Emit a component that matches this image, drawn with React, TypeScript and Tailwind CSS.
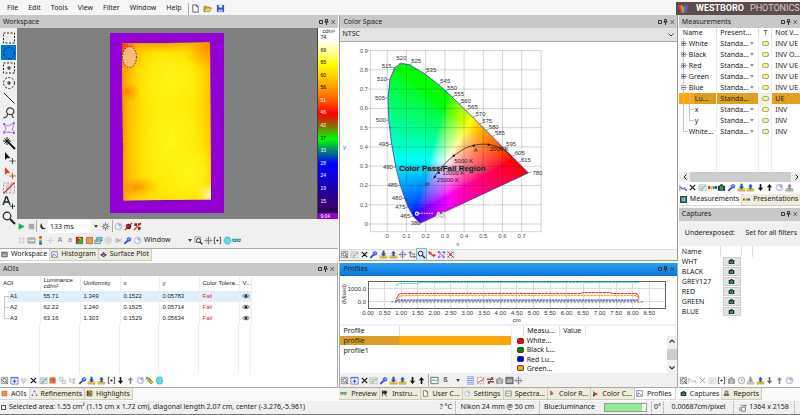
import React from "react";
import type { ReactNode } from "react";

/* ------------------------------------------------------------------ */
/* Icons: small 10x10 drawings shared by every toolbar                  */
/* ------------------------------------------------------------------ */

const tray = (arrow: string, base: string, up: boolean) => (
  <>
    <path d="M.5 6.500 2.500 5.500h5l2 1V9h-9z" fill={base} />
    <path d="M1 9h8" stroke="#8b8140" strokeWidth=".6" />
    <path d={up ? "M5 .8 7.600 4H6.200v3H3.800V4H2.400z" : "M3.800.8h2.400V4h1.600L5 7.400 2.200 4h1.600z"} fill={arrow} />
  </>
);

const camera = (body: string, lens: string) => (
  <>
    <path d="M1 3h2l1-1.500h2L7 3h2v5.700H1z" fill={body} />
    <circle cx="5" cy="5.600" r="2.200" fill={lens} />
    <circle cx="5" cy="5.600" r=".9" fill={body} />
  </>
);

const sheet = (a: string, b: string) => (
  <>
    <path d="M1 2h8v6.500H1z" fill="#eef3ee" stroke={a} strokeWidth=".7" />
    <path d="M1 4h8M1 6h5M3.500 2v6.500" stroke={a} strokeWidth=".5" />
    <path d="M3 8.500 8.500 2.500" stroke={b} strokeWidth="1.300" />
  </>
);

const arrowDown = (c: string) => <path d="M4.100 1h1.800v4.400h2L5 9 2.100 5.400h2z" fill={c} />;
const arrowUp = (c: string) => <path d="M4.100 9h1.800V4.600h2L5 1 2.100 4.600h2z" fill={c} />;

const icons: Record<string, ReactNode> = {
  find: (
    <>
      <path d="M1.500 1.500h7v7h-7z" fill="#f4f4f4" stroke="#777" strokeWidth=".8" />
      <circle cx="5" cy="4.800" r="2" fill="#fff" stroke="#444" strokeWidth=".9" />
      <path d="m6.300 6.200 2.200 2.300" stroke="#444" />
    </>
  ),
  sheet: sheet("#9db5a6", "#9cbfa5"),
  sheetGray: sheet("#ccc", "#d5d5d5"),
  sheetBlue: sheet("#7fa6cf", "#7ab57c"),
  x: <path d="m2 2 6 6M8 2 2 8" stroke="#111" strokeWidth="1.300" />,
  xGray: <path d="m2 2 6 6M8 2 2 8" stroke="#999" strokeWidth="1" />,
  wrench: (
    <>
      <path d="M1.500 8.800 5.500 4.800" stroke="#2a45c8" strokeWidth="1.900" />
      <path d="M3.800 2.800 6.500 1l2.800 1.200-.5 3.300-3 1z" fill="#4a66e0" />
      <path d="m6 4 2.500-2" stroke="#dce3ff" strokeWidth=".9" />
    </>
  ),
  trayDown: tray("#2f4fd0", "#e8c935", false),
  trayUp: tray("#2f4fd0", "#e8c935", true),
  trayGray: tray("#999", "#ccc", false),
  trayPink: tray("#c061c5", "#9fc59f", true),
  target: (
    <>
      <circle cx="5" cy="5" r="3" fill="#dfe3f2" stroke="#a5aac0" strokeWidth=".8" />
      <path d="M5 .5v9M.5 5h9" stroke="#6f7694" strokeWidth=".9" />
    </>
  ),
  axes: <path d="M2.500 1v6.500H9.500M.8 3h3.400M7 6v3M4 4.400h4" stroke="#555" strokeWidth=".9" fill="none" />,
  zoom: (
    <>
      <circle cx="4" cy="4" r="2.600" fill="#eef" stroke="#222" strokeWidth="1.100" />
      <path d="m6 6 3 3" stroke="#222" strokeWidth="1.500" />
    </>
  ),
  redArrow: (
    <>
      <path d="m1 1 4.500 2L3 5.300z" fill="#e22" />
      <path d="m3 3 3.500 3.500M6 6h3.500M7.700 4.500v3.500" stroke="#e22" strokeWidth="1.200" />
    </>
  ),
  nodes: (
    <>
      <path d="M2 2 8 3 7 8 3 7z" fill="none" stroke="#c880e0" strokeWidth=".8" />
      <path d="M1 1h2v2H1zM7 1.500h2v2H7zM6.500 7h2v2h-2zM1 7h2v2H1z" fill="#6a50e6" />
      <path d="m3 3 4 4" stroke="#e55" />
    </>
  ),
  nodesX: (
    <>
      <path d="M1.500 1.500h7v7h-7z" fill="none" stroke="#999" strokeDasharray="1 1" />
      <path d="M3.500 3.500h3v3h-3z" fill="#888" />
      <path d="m2 2 6.500 6.500M8 2 2 8" stroke="#d33" strokeWidth="1.100" />
    </>
  ),
  add: (
    <>
      <path d="M1 1.500h8v7.500H1z" fill="#eef2ff" stroke="#5b66b0" strokeWidth=".8" />
      <path d="M1 2h8" stroke="#5b66b0" strokeWidth="1.200" />
      <path d="M5 3.800v4M3 5.800h4" stroke="#2a3bd0" strokeWidth="1" />
    </>
  ),
  heart: <path d="M5 8.500 1.500 4.500l1.500-2 2 1.300L7 2.500l1.500 2z" fill="#ddd" stroke="#bbb" strokeWidth=".8" />,
  orange: (
    <>
      <path d="M1.500 1.500h7v7h-7z" fill="#f09a62" stroke="#a5582b" strokeWidth=".8" />
      <path d="M3 4h4M3 6h4" stroke="#e08550" strokeWidth=".7" />
    </>
  ),
  hatch: (
    <>
      <path d="M1.500 1.500h7v7h-7z" fill="#e88355" />
      <path d="m5 1.500 3.500 4M2 4h5M4 6.500h4" stroke="#8c4020" strokeWidth=".8" />
    </>
  ),
  copy: <path d="M1.500 1.500h4v4h-4zM4.500 4.500h4v4h-4z" fill="#eee" stroke="#bbb" strokeWidth=".9" />,
  tree: <path d="M2 1v6h3M2 4h3M5.500 3h2v2h-2zM5.500 6.500h2v2h-2z" fill="#eee" stroke="#bbb" strokeWidth=".9" />,
  brackets: (
    <>
      <path d="M3 1.500H1.500v7H3M7 1.500h1.500v7H7" fill="none" stroke="#333" strokeWidth=".9" />
      <path d="M3.500 5h3M5 3.700v2.600" stroke="#333" strokeWidth=".9" />
    </>
  ),
  down: arrowDown("#111"),
  up: arrowUp("#111"),
  upGray: arrowUp("#888"),
  downGray: arrowDown("#666"),
  lens: (
    <>
      <circle cx="5" cy="5" r="3.800" fill="#dfe3ee" stroke="#aeb4c8" strokeWidth=".8" />
      <path d="M5 1.800a3 3 0 0 1 3 3L5 5z" fill="#a3aedd" />
      <circle cx="4.300" cy="5.500" r="1.500" fill="#fff" />
    </>
  ),
  clock: (
    <>
      <circle cx="5" cy="5" r="3.600" fill="#f3f3f3" stroke="#999" strokeWidth=".9" />
      <path d="M5 3v2.200h1.800" fill="none" stroke="#999" strokeWidth=".8" />
    </>
  ),
  key: (
    <>
      <path d="m1.500 1.500 2.500.4L8.800 7 7 8.800 2 4z" fill="#d9d435" stroke="#55621b" strokeWidth=".8" />
      <path d="m3.500 4.500 3-1M5 6l2-1" stroke="#4d9a2d" />
    </>
  ),
  hex: <path d="M3 1.200h4L9 5 7 8.800H3L1 5z" fill="#62dce8" stroke="#4aa7b2" strokeWidth=".8" />,
  glasses: (
    <>
      <path d="M.5 3.500h3.800v2.700H1.200zM5.700 3.500h3.800L8.800 6.200H5.700z" fill="#7cdce0" stroke="#28757a" strokeWidth=".9" />
      <path d="M4.300 4.200h1.400" stroke="#28757a" />
    </>
  ),
  rainbow: (
    <>
      <path d="M0 3.500h2.500v3H0z" fill="#e11" />
      <path d="M2.500 3.500H5v3H2.500z" fill="#f6c500" />
      <path d="M5 3.500h2.500v3H5z" fill="#2db52d" />
      <path d="M7.500 3.500H10v3H7.500z" fill="#1c3ce0" />
    </>
  ),
  camera: camera("#26312c", "#33b97c"),
  cameraGray: camera("#9a9a9a", "#ccc"),
  wave: (
    <>
      <path d="M1 2v7M1 5l3 1 5 2" fill="none" stroke="#777" strokeWidth=".9" />
      <path d="m2 4 2 3 2-2 1.500 3L9 8" fill="none" stroke="#3344dd" strokeWidth="1" />
    </>
  ),
  waveGray: <path d="M1 2v6M2 4l3 2.500L8 5l1 3" fill="none" stroke="#aaa" strokeWidth="1" />,
  chart: (
    <>
      <path d="M1 1.500h8v7H1z" fill="#f6fff6" stroke="#4c6256" strokeWidth=".9" />
      <path d="M1.500 5.500 4 4l2 1.500L8.500 4" fill="none" stroke="#3a8d5b" strokeWidth=".9" />
    </>
  ),
  lines: <path d="M1 1h8M1 3h8M1 5h8M1 7h8M1 9h8" stroke="#6f86ea" strokeWidth=".9" />,
  slash: (
    <>
      <path d="M1.500 1.500h7v7h-7z" fill="#fff" stroke="#aaa" strokeWidth=".8" />
      <path d="m2 8 3-3 1.500 1L8.500 2" fill="none" stroke="#d33" />
    </>
  ),
  notEqual: (
    <>
      <path d="M1 3.500h7l-2-2M9 6.500H2l2 2" fill="none" stroke="#111" strokeWidth="1.100" />
      <path d="m2 9 6-8" stroke="#d22" strokeWidth="1" />
    </>
  ),
  table: (
    <>
      <path d="M1 1.500h8v7H1z" fill="#888" stroke="#444" strokeWidth=".8" />
      <path d="M2 4.500h6M2 6.500h6" stroke="#eee" strokeWidth=".8" />
    </>
  ),
  play: <path d="M1.800 1.500 8.500 5 1.800 8.500z" fill="#1fae58" />,
  stop: <path d="M2 2h6v6H2z" fill="#a9a9a9" />,
  moon: <path d="M4.500 1A3.800 3.800 0 1 0 9 7 4.500 4.500 0 0 1 4.500 1z" fill="#333" />,
  gear: (
    <>
      <path d="M5 .5v9M.5 5h9M1.800 1.800l6.400 6.400M8.200 1.800 1.800 8.200" stroke="#666" strokeWidth=".9" />
      <circle cx="5" cy="5" r="2" fill="#eee" stroke="#555" strokeWidth=".9" />
    </>
  ),
  noEye: (
    <>
      <circle cx="5" cy="5" r="3" fill="#333" />
      <circle cx="4" cy="5" r="1.500" fill="#e33" />
      <path d="m1 9 8-8" stroke="#e11" strokeWidth="1.400" />
    </>
  ),
  noGrid: (
    <>
      <path d="M1.500 1.500h3v3h-3zM5.500 5.500h3v3h-3zM5.500 1.500h3v2h-3z" fill="#444" />
      <path d="m1 9 8-8" stroke="#e11" strokeWidth="1.400" />
    </>
  ),
  grid: <path d="M3 1v8M7 1v8M1 3h8M1 7h8" stroke="#ccc" strokeWidth=".9" />,
  card: (
    <>
      <path d="M1 2h8v6H1z" fill="#bbb" stroke="#999" strokeWidth=".8" />
      <path d="M2 5h6" stroke="#eee" />
    </>
  ),
  palette: (
    <>
      <path d="M3.500.5h3v2.300h-3z" fill="#e11" />
      <path d="M3.500 2.800h3V5h-3z" fill="#f6d300" />
      <path d="M3.500 5h3v2.300h-3z" fill="#29ad29" />
      <path d="M3.500 7.300h3v2.200h-3z" fill="#1c3ce0" />
    </>
  ),
  crossGray: <path d="M5 1v8M1 5h8M3 3l1 1M7 3 6 4" stroke="#ccc" strokeWidth="1" />,
  split: (
    <>
      <path d="M1.500 1.500h7v7h-7z" fill="#e22" stroke="#222" strokeWidth=".8" />
      <path d="M8.500 1.500v7h-7z" fill="#2fbb2f" />
      <path d="m3 3 2.500-1.500L8 4" fill="#f6d300" />
    </>
  ),
  layers: (
    <>
      <path d="M3 1.500h6v4H3z" fill="#7bd1d4" stroke="#378287" strokeWidth=".8" />
      <path d="M1 4.500h6v4H1z" fill="#b9eaec" stroke="#378287" strokeWidth=".8" />
      <path d="M2 6h3" stroke="#d55" />
    </>
  ),
  at: (
    <>
      <circle cx="5" cy="5" r="3.600" fill="#eee" stroke="#bbb" strokeWidth=".9" />
      <circle cx="5" cy="5" r="1.300" fill="none" stroke="#aaa" strokeWidth=".9" />
    </>
  ),
  skip: <path d="M2 2v6M3.500 3l3.500 2-3.500 2zM7 3.500h2M7 6h2" fill="#aaa" stroke="#aaa" strokeWidth=".8" />,
  zoomArea: (
    <>
      <path d="M1 1h6v6H1z" fill="none" stroke="#444" strokeDasharray="1 1" />
      <circle cx="5" cy="5" r="2.200" fill="#fff" stroke="#222" />
      <path d="m6.500 6.500 2.700 2.700" stroke="#222" strokeWidth="1.300" />
    </>
  ),
  heat: (
    <>
      <path d="M0 0h10v10H0z" fill="#1a3bd5" />
      <path d="M2 2h6v6H2z" fill="#3c3" />
      <path d="M3 3h4v4H3z" fill="#fd0" />
      <path d="M4 4h2v2H4z" fill="#e22" />
    </>
  ),
  histogram: (
    <>
      <path d="M1 1h8v8H1z" fill="#fff" stroke="#456" strokeWidth=".9" />
      <path d="m2 8 2-4 2 2 2 2" fill="none" stroke="#22f" strokeWidth=".9" />
    </>
  ),
  surface: (
    <>
      <path d="M0 5.500 3 4l2-3 2 3 3 1.500L5 9z" fill="#2038c8" />
      <path d="M3 4.500 5 1l2 3.500z" fill="#e22" />
      <path d="M2.500 5.500h5L5 7.500z" fill="#f3cf20" />
    </>
  ),
  points: (
    <>
      <path d="M4 1h2v2H4zM1 6.500h2v2H1zM7 6.500h2v2H7z" fill="#3d55e0" />
      <path d="M4.500 3.500 2.500 6M5.500 3.500 7.500 6" stroke="#9aa8f0" strokeWidth=".8" />
    </>
  ),
  flags: (
    <>
      <path d="M2 1v8" stroke="#111" />
      <path d="M2 1h6v4H2z" fill="#222" />
      <path d="m5 6 4-3M5 5l3 4" stroke="#111" strokeWidth="1.100" />
      <path d="M3.500 2h1v1h-1z" fill="#fff" />
    </>
  ),
  doc: <path d="M2 1h4l2 2v6H2zM6 1v2h2" fill="#fff" stroke="#333" strokeWidth=".8" />,
  colorR: (
    <>
      <path d="M2 1v6l5-2z" fill="#c8579a" />
      <path d="M2 5v3l4-2z" fill="#3b9d5e" />
      <path d="M2 1 5 3 2 4z" fill="#667" />
    </>
  ),
  colorC: (
    <>
      <path d="M1.500.5v9l3-4.500z" fill="#18b648" />
      <path d="M3 3 9 6 3 8z" fill="#e22" />
      <path d="M1.500 6v3.500L5 8z" fill="#2238e0" />
    </>
  ),
  report: (
    <>
      <path d="M1 6h8v2.500H1z" fill="#666" />
      <path d="M3 1.500h4V6H3z" fill="#bbb" stroke="#444" strokeWidth=".8" />
    </>
  ),
  folder: (
    <>
      <path d="M1 8.500v-6h3l1 1h3v1" fill="#d7a93c" stroke="#8d6a1d" strokeWidth=".6" />
      <path d="m1 8.500 2-4h6.500l-2 4z" fill="#f5d06b" stroke="#8d6a1d" strokeWidth=".6" />
    </>
  ),
  save: (
    <>
      <path d="M1 1h8v8H1z" fill="#3b50b8" />
      <path d="M3 1h4v3H3z" fill="#dfe5ff" />
      <path d="M2.500 6h5v3h-5z" fill="#a9b5ea" />
    </>
  ),
  eye: (
    <>
      <path d="M.5 5.200C3 2 7 2 9.500 5.200 7 8 3 8 .5 5.200z" fill="#dfe6ee" stroke="#444" strokeWidth=".8" />
      <circle cx="5" cy="5.200" r="1.700" fill="#1c2d42" />
    </>
  ),
  size: (
    <>
      <path d="M3 4h5v5H3z" fill="none" stroke="#555" strokeWidth=".9" />
      <path d="M1 4v5M3 2h6M1 1h1M8 1l1 1-1 1" fill="none" stroke="#555" strokeWidth=".9" />
    </>
  ),
};

function Icon({ name, className = "size-[9px]" }: { name: string; className?: string }) {
  return (
    <svg viewBox="0 0 10 10" className={`shrink-0 ${className}`} aria-hidden="true">
      {icons[name]}
    </svg>
  );
}

function Tool({ name, active = false }: { name: string; active?: boolean }) {
  return (
    <button
      type="button"
      aria-label={name}
      className={`flex h-[11px] w-[9px] shrink-0 items-center justify-center ${
        active ? "bg-[#d6ebfb] outline outline-[#7ab8e8]" : ""
      }`}
    >
      <Icon name={name} />
    </button>
  );
}

function Tools({ names, className, active }: { names: string[]; className: string; active?: string }) {
  return (
    <div className={`flex items-center justify-between ${className}`}>
      {names.map((n, i) => (
        <Tool key={i} name={n} active={n === active} />
      ))}
    </div>
  );
}

/* ------------------------------------------------------------------ */
/* Panel chrome                                                         */
/* ------------------------------------------------------------------ */

function Title({ children, active = false }: { children: ReactNode; active?: boolean }) {
  return (
    <header
      className={`flex h-[13px] shrink-0 items-center justify-between pr-[2px] pl-[3px] ${
        active ? "bg-linear-to-b from-[#2b9bf8] to-[#0678d8]" : "bg-[#c8c8c8]"
      }`}
    >
      <h2 className="leading-[12px]">{children}</h2>
      <svg viewBox="0 0 17 6" className="h-[6px] w-[17px] shrink-0" aria-hidden="true" fill="none" stroke="#333">
        <path d="M.5 1.500h3v3h-3z" />
        <path d="M6.500.500h2v2.500h-2zM5.500 3h4M7.500 3v3" />
        <path d="m12.500 1 3.500 4M16 1l-3.500 4" strokeWidth=".7" />
      </svg>
    </header>
  );
}

function Tab({
  icon,
  children,
  active = false,
  grow = false,
}: {
  icon: string;
  children: ReactNode;
  active?: boolean;
  grow?: boolean;
}) {
  return (
    <button
      type="button"
      role="tab"
      aria-selected={active}
      className={`flex h-[12px] items-center gap-[3px] border-r border-b pr-[2px] pl-[1px] leading-[10px] whitespace-nowrap ${
        grow ? "flex-1" : ""
      } ${active ? "border-[#d8d8d8] bg-white" : "border-[#cfccb8] bg-[#eeecdc]"}`}
    >
      <Icon name={icon} className="size-[7px]" />
      <span className={grow ? "flex-1 text-center" : ""}>{children}</span>
    </button>
  );
}

/* ------------------------------------------------------------------ */
/* Workspace                                                            */
/* ------------------------------------------------------------------ */

const paletteTools: { label: string; art: ReactNode }[] = [
  { label: "Rectangle", art: <path d="M1.500 2h11v10h-11z" fill="none" stroke="#222" strokeDasharray="2 1.500" /> },
  { label: "Ellipse", art: <circle cx="7" cy="7" r="5.500" fill="none" stroke="#0b2f52" strokeDasharray="2 1.500" /> },
  {
    label: "Add rectangle",
    art: (
      <>
        <path d="M1.500 2h11v10h-11z" fill="none" stroke="#222" strokeDasharray="2 1.500" />
        <path d="M7 5v4M5 7h4" stroke="#222" />
      </>
    ),
  },
  {
    label: "Add ellipse",
    art: (
      <>
        <circle cx="7" cy="7" r="5.500" fill="none" stroke="#222" strokeDasharray="2 1.500" />
        <path d="M7 5v4M5 7h4" stroke="#222" />
      </>
    ),
  },
  { label: "Line", art: <path d="m2 2 10.500 10.500" stroke="#222" /> },
  {
    label: "Lasso",
    art: <path d="M5 7C3.500 4 6 1.500 9 2s4 4.500 1.500 6C8.500 9 6 8.500 5 7zm0 0C6.500 9 5 11.500 1.500 12M9.500 8.500l2 3.500" fill="none" stroke="#333" strokeWidth="1.100" />,
  },
  {
    label: "Polygon",
    art: (
      <>
        <path d="m2 3 4 2 6-3-1.500 6 1.500 4-5-1-5 .5L4 8z" fill="none" stroke="#c85be0" strokeWidth=".9" />
        <path d="M1 2h2v2H1zM11 1h2v2h-2zM1 10.500h2v2H1zM11 11h2v2h-2z" fill="#8378ee" />
      </>
    ),
  },
  {
    label: "Magic wand",
    art: (
      <>
        <path d="m6 6 7 7" stroke="#111" strokeWidth="2" />
        <path d="M5 1v8M1 5h8M2.500 2.500l5 5M7.500 2.500l-5 5" stroke="#111" strokeWidth="1" />
      </>
    ),
  },
  {
    label: "Select and move",
    art: (
      <>
        <path d="M3 1v8l2-2 3.500.2z" fill="#111" />
        <path d="M10.500 7v6M7.500 10h6" stroke="#555" />
      </>
    ),
  },
  {
    label: "Move vertices",
    art: (
      <>
        <path d="M3 1v8l2-2 3.500.2z" fill="#f03a20" />
        <path d="M10.500 7v6M7.500 10h6" stroke="#f03a20" />
      </>
    ),
  },
  {
    label: "Clear selection",
    art: (
      <>
        <path d="M1.500 2h11v10h-11z" fill="#e8e8e8" stroke="#999" strokeDasharray="2 1.500" />
        <path d="M5 10V4h4v3H5m2 0 3 3" fill="none" stroke="#bbb" />
        <path d="m1.500 12.500 11-11" stroke="#e03030" strokeWidth="1.200" />
      </>
    ),
  },
  {
    label: "Move text",
    art: (
      <>
        <path d="M1 9 4 1h1l3 8M2.200 6h4.600" fill="none" stroke="#222" strokeWidth="1.400" />
        <path d="M10.500 7.500v5.500M8 10.200h5" stroke="#333" />
      </>
    ),
  },
  {
    label: "Zoom",
    art: (
      <>
        <circle cx="5" cy="5" r="3.800" fill="#f6f6f6" stroke="#222" strokeWidth="1.200" />
        <path d="m8 8 5 5" stroke="#222" strokeWidth="2" />
      </>
    ),
  },
];

function HeatImage() {
  return (
    <svg viewBox="0 0 114 180" className="h-[180px] w-[114px]" role="img" aria-label="Luminance image">
      <defs>
        <clipPath id="panel">
          <path d="M12 10.500 100 9.500 101 166.500 13.500 167.500z" />
        </clipPath>
        <radialGradient id="red">
          <stop offset="0" stopColor="#ff2000" />
          <stop offset="1" stopColor="#ff5000" stopOpacity="0" />
        </radialGradient>
        <radialGradient id="hot">
          <stop offset="0" stopColor="#ff7d00" />
          <stop offset="1" stopColor="#ff9c00" stopOpacity="0" />
        </radialGradient>
        <radialGradient id="lit">
          <stop offset="0" stopColor="#fffa1e" />
          <stop offset=".5" stopColor="#fff414" stopOpacity=".8" />
          <stop offset="1" stopColor="#fff000" stopOpacity="0" />
        </radialGradient>
        <radialGradient id="pale">
          <stop offset="0" stopColor="#fffed0" />
          <stop offset="1" stopColor="#ffff60" stopOpacity="0" />
        </radialGradient>
        <linearGradient id="edge">
          <stop offset="0" stopColor="#ff8200" />
          <stop offset=".1" stopColor="#ffb400" stopOpacity=".6" />
          <stop offset=".35" stopColor="#ffd000" stopOpacity="0" />
          <stop offset=".75" stopColor="#ffd000" stopOpacity="0" />
          <stop offset="1" stopColor="#ffa800" stopOpacity=".7" />
        </linearGradient>
        <filter id="grain" x="0" y="0" width="100%" height="100%">
          <feTurbulence type="fractalNoise" baseFrequency=".6" numOctaves="2" seed="4" />
          <feColorMatrix values="0 0 0 0 1  0 0 0 0 .65  0 0 0 0 0  1.800 0 0 0 -.75" />
        </filter>
      </defs>
      <path d="M0 0h114v180H0z" fill="#9400d3" />
      <path d="M12 10 100 9 101.500 167 13 168z" fill="#2a18e0" />
      <g clipPath="url(#panel)">
        <path d="M0 0h114v180H0z" fill="#ffe100" />
        <path d="M12 0h90v180H12z" fill="url(#edge)" />
        <ellipse cx="60" cy="50" rx="40" ry="44" fill="url(#lit)" />
        <ellipse cx="62" cy="110" rx="42" ry="70" fill="url(#lit)" />
        <ellipse cx="80" cy="140" rx="30" ry="36" fill="url(#lit)" />
        <ellipse cx="98" cy="12" rx="26" ry="26" fill="url(#hot)" />
        <ellipse cx="50" cy="8" rx="60" ry="12" fill="url(#hot)" />
        <ellipse cx="12" cy="12" rx="24" ry="36" fill="url(#hot)" />
        <ellipse cx="12" cy="11" rx="15" ry="24" fill="url(#red)" />
        <ellipse cx="16" cy="59" rx="15" ry="11" fill="url(#hot)" />
        <ellipse cx="26" cy="154" rx="24" ry="11" fill="url(#hot)" opacity=".8" />
        <ellipse cx="101" cy="162" rx="16" ry="14" fill="url(#pale)" />
        <path d="M0 0h114v180H0z" filter="url(#grain)" opacity=".5" />
      </g>
      <ellipse cx="19.500" cy="24" rx="7" ry="10.500" fill="#f9b87c" stroke="#333" strokeWidth=".9" strokeDasharray="1.500 1.500" />
    </svg>
  );
}

const scaleLabels = ["74", "69", "65", "60", "56", "51", "46", "42", "37", "33", "28", "24", "19", "15"];

function ColorScale() {
  return (
    <div className="flex w-[21px] shrink-0 flex-col border-l border-[#444] bg-[linear-gradient(to_bottom,#fff_6%,#ffff90_13%,#ff0_19%,#ffb000_29%,#ff5a00_38%,#f00_45%,#8a6a00_51%,#0f0_58%,#008a70_64%,#00f_71%,#1a00a0_85%,#3a0070_93%,#200040_97%)] pl-[2px] font-['Liberation_Sans',Arial,sans-serif] text-[5px] leading-[6px]">
      <div className="pl-[2px]">cd/m²</div>
      <div className="flex flex-1 flex-col justify-between pb-[9px]">
        {scaleLabels.map((v, i) => (
          <div key={v} className={i > 4 && i !== 8 ? "text-white" : "text-black"}>
            {v}
          </div>
        ))}
      </div>
      <div className="-ml-[2px] bg-[#9400d3] pl-[2px] text-white">9.04</div>
    </div>
  );
}

function Divider() {
  return <div className="h-[12px] w-px shrink-0 bg-[#aaa]" />;
}

function Caret() {
  return (
    <svg viewBox="0 0 4 3" className="h-[3px] w-[4px] shrink-0" aria-hidden="true">
      <path d="M0 0h4L2 3z" fill="#444" />
    </svg>
  );
}

function Workspace() {
  return (
    <section className="flex min-h-0 flex-[234] flex-col border-b border-[#aaa] bg-[#f0f0f0]">
      <Title>Workspace</Title>
      <div className="flex min-h-0 flex-1">
        <div className="flex w-[17px] shrink-0 flex-col items-center pt-[2px]">
          {paletteTools.map((t, i) => (
            <button
              key={t.label}
              type="button"
              aria-label={t.label}
              className={`flex h-[15px] w-[15px] shrink-0 items-center justify-center ${i === 1 ? "bg-[#0078d7]" : ""}`}
            >
              <svg viewBox="0 0 14 14" className="size-[14px]" aria-hidden="true">
                {t.art}
              </svg>
            </button>
          ))}
        </div>
        <div className="flex min-w-0 flex-1 flex-col">
          <div className="flex min-h-0 flex-1">
            <div className="flex flex-1 items-center justify-center bg-[#808080]">
              <HeatImage />
            </div>
            <ColorScale />
          </div>
          <div className="flex h-[15px] items-center">
            <Tools names={["play", "stop"]} className="w-[19px]" />
            <Divider />
            <Tools names={["moon"]} className="ml-[1px] w-[10px]" />
            <input
              aria-label="Exposure"
              defaultValue="133 ms"
              className="h-[13px] w-[43px] bg-white pl-[2px]"
            />
            <div className="flex w-[10px] justify-center">
              <Caret />
            </div>
            <Tools names={["gear"]} className="w-[11px]" />
            <Divider />
            <Tools names={["lens", "noEye", "noGrid"]} className="ml-[1px] w-[28px]" />
          </div>
          <div className="flex h-[14px] items-center">
            <Tools names={["grid", "card", "palette", "crossGray"]} className="w-[38px]" />
            <button type="button" className="w-[10px] text-[#777]">A</button>
            <button type="button" className="w-[10px] text-[#777]">a</button>
            <Tools
              names={["split", "orange", "layers", "at", "skip", "wrench", "lens"]}
              className="w-[67px]"
            />
            <select aria-label="Display mode" className="ml-[2px] w-[44px] appearance-none">
              <option>Window</option>
            </select>
            <Caret />
            <Tools names={["zoomArea", "target", "brackets", "hex", "glasses"]} className="ml-[2px] w-[47px]" />
          </div>
        </div>
      </div>
    </section>
  );
}

/* ------------------------------------------------------------------ */
/* AOIs                                                                 */
/* ------------------------------------------------------------------ */

const aois = [
  ["A1", "55.71", "1.349", "0.1522", "0.05783"],
  ["A2", "62.22", "1.240", "0.1525", "0.05714"],
  ["A3", "63.16", "1.303", "0.1529", "0.05634"],
];

function Aois() {
  const th = "border-r border-[#eee] pl-[3px] text-left font-normal";
  const td = "border-r border-[#eee] pl-[3px]";
  return (
    <section className="flex min-h-0 flex-[125] flex-col border-r border-b border-[#aaa] bg-white">
      <Title>AOIs</Title>
      <table className="w-full table-fixed border-collapse font-['Liberation_Sans',Arial,sans-serif] text-[6px] leading-[6px]">
        <colgroup>
          <col className="w-[40px]" />
          <col className="w-[40px]" />
          <col className="w-[40px]" />
          <col className="w-[39px]" />
          <col className="w-[40px]" />
          <col className="w-[40px]" />
          <col className="w-[12px]" />
          <col />
        </colgroup>
        <thead>
          <tr className="h-[15px]">
            <th className={th}>AOI</th>
            <th className={th}>Luminance<br />cd/m²</th>
            <th className={th}>Uniformity</th>
            <th className={th}>x</th>
            <th className={th}>y</th>
            <th className={`${th} whitespace-nowrap`}>Color Tolera...</th>
            <th className={`${th} whitespace-nowrap`}>V...</th>
            <th />
          </tr>
        </thead>
        <tbody>
          {aois.map((row, i) => (
            <tr key={row[0]} className={`h-[11px] ${i === 0 ? "bg-[#e1effb]" : ""}`}>
              <td className={`border-r border-[#eee] ${i === 0 ? "bg-[linear-gradient(to_right,#fff_8px,#e1effb_8px)]" : ""}`}>
                <span className="flex items-center gap-[1px]">
                  <svg viewBox="0 0 9 11" className="h-[11px] w-[9px]" aria-hidden="true">
                    <path d={i === 0 ? "M4.500 11V5.500H9" : i === 1 ? "M4.500 0v11M4.500 5.500H9" : "M4.500 0v5.500H9"} fill="none" stroke="#bbb" strokeWidth=".8" />
                  </svg>
                  {row[0]}
                </span>
              </td>
              {row.slice(1).map((v) => (
                <td key={v} className={td}>{v}</td>
              ))}
              <td className={`${td} text-[#f02030]`}>Fail</td>
              <td className="border-r border-[#eee] pl-[2px]"><Icon name="eye" className="size-[8px]" /></td>
              <td className="bg-white" />
            </tr>
          ))}
        </tbody>
      </table>
      <div className="grid flex-1 grid-cols-[40px_40px_40px_39px_40px_40px_12px_1fr] divide-x divide-[#eee]">
        {[0, 1, 2, 3, 4, 5, 6, 7].map((i) => <div key={i} />)}
      </div>
      <Tools
        names={["find", "add", "heart", "x", "sheetBlue", "hatch", "copy", "tree", "wrench", "trayDown", "trayUp", "brackets", "down", "upGray", "lens", "key", "hex"]}
        className="h-[13px] w-[164px]"
      />
    </section>
  );
}

/* ------------------------------------------------------------------ */
/* Color space                                                          */
/* ------------------------------------------------------------------ */

// Spectral locus: wavelength, x, y, label offset; unlabelled points have no offset.
const locus: [number, number, number, number?, number?][] = [
  [380, 0.1741, 0.005, -10, 2],
  [450, 0.1566, 0.0177],
  [465, 0.1355, 0.0399, -13, 2],
  [475, 0.1096, 0.0868, -13, 2],
  [480, 0.0913, 0.1327, -13, 2],
  [485, 0.0687, 0.2007, -13, 2],
  [490, 0.0454, 0.295, -13, 2],
  [495, 0.0235, 0.4127, -13, 2],
  [500, 0.0082, 0.5384, -13, 2],
  [505, 0.0039, 0.6548, -13, 2],
  [510, 0.0139, 0.7502, -13, 2],
  [515, 0.0389, 0.812, -13, 0],
  [520, 0.0743, 0.8338, -5, -3],
  [525, 0.1142, 0.8262, 2, -2],
  [535, 0.1929, 0.7816, 2, -1],
  [545, 0.2658, 0.7243, 2, -1],
  [550, 0.3016, 0.6923, 2, -1],
  [555, 0.3373, 0.6589, 2, -1],
  [560, 0.3731, 0.6245, 2, -1],
  [565, 0.4087, 0.5896, 2, -1],
  [570, 0.4441, 0.5547, 3, -1],
  [575, 0.4788, 0.5202, 3, -1],
  [580, 0.5125, 0.4866, 3, -1],
  [585, 0.5448, 0.4544, 3, -1],
  [595, 0.6029, 0.3965, 3, -2],
  [605, 0.6482, 0.3514, 3, -1],
  [615, 0.6801, 0.3197, 3, 0],
  [780, 0.7347, 0.2653, 4, 2],
];

const px = (x: number) => 386.3 + x * 192.5;
const py = (y: number) => 224.3 - y * 193;
const outline = locus.map(([, x, y], i) => `${i ? "L" : "M"}${px(x).toFixed(1)} ${py(y).toFixed(1)}`).join("") + "Z";

function chromaColor(x: number, y: number) {
  const X = x / y;
  const Z = (1 - x - y) / y;
  const rgb = [
    3.2406 * X - 1.5372 - 0.4986 * Z,
    -0.9689 * X + 1.8758 + 0.0415 * Z,
    0.0557 * X - 0.204 + 1.057 * Z,
  ].map((v) => Math.max(0, v));
  const top = Math.max(...rgb);
  return `rgb(${rgb.map((v) => Math.round(255 * Math.pow(v / top, 1 / 1.8))).join(",")})`;
}

const cells: { x: number; y: number; fill: string }[] = [];
for (let cx = 384; cx < 532; cx += 2) {
  for (let cy = 60; cy < 227; cy += 2) {
    const x = (cx + 1 - 386.3) / 192.5;
    const y = Math.max(0.004, (224.3 - cy - 1) / 193);
    if (x + y < 1.06) cells.push({ x: cx, y: cy, fill: chromaColor(x, y) });
  }
}

function Chromaticity() {
  return (
    <svg
      viewBox="339 42 337 206"
      preserveAspectRatio="xMinYMin meet"
      className="min-h-0 w-full flex-1 font-['Liberation_Sans',Arial,sans-serif] text-[6px]"
      role="img"
      aria-label="Chromaticity diagram"
    >
      <defs>
        <clipPath id="locus"><path d={outline} /></clipPath>
        <filter id="smooth"><feGaussianBlur stdDeviation="1.200" /></filter>
      </defs>
      <g clipPath="url(#locus)">
        <g filter="url(#smooth)">
          {cells.map((c) => (
            <rect key={`${c.x}-${c.y}`} x={c.x} y={c.y} width="2.500" height="2.500" fill={c.fill} />
          ))}
        </g>
      </g>
      <g stroke="#000" strokeOpacity=".17" strokeWidth="1">
        {[0, 1, 2, 3, 4, 5, 6, 7].map((i) => (
          <path key={i} d={`M${px(i / 10)} 50.500V232`} />
        ))}
        {[0, 1, 2, 3, 4, 5, 6, 7, 8, 9].map((i) => (
          <path key={i} d={`M366 ${py(i / 10)}H540.500`} />
        ))}
        <path d="M369.500 50.500V232H540.500V50.500" fill="none" />
      </g>
      <path d={outline} fill="none" stroke="#3b3bb0" strokeWidth=".8" />
      <g fill="#555">
        {[0, 1, 2, 3, 4, 5, 6, 7].map((i) => (
          <text key={i} x={px(i / 10)} y="238.500" textAnchor="middle">{i ? `0.${i}` : "0"}</text>
        ))}
        {[0, 1, 2, 3, 4, 5, 6, 7, 8, 9].map((i) => (
          <text key={i} x="367" y={py(i / 10) + 2} textAnchor="end">{i ? `0.${i}` : "0"}</text>
        ))}
        <text x="457" y="246" textAnchor="middle">x</text>
        <text x="342" y="149">y</text>
      </g>
      <g fill="#333">
        {locus.map(([nm, x, y, dx, dy]) =>
          dx === undefined || dy === undefined ? null : (
            <g key={nm}>
              <path d={`M${px(x)} ${py(y)}l${dx < 0 ? -3 : 3} ${dx < 0 ? 0 : -1}`} stroke="#6b6bc8" strokeWidth=".7" />
              <text x={px(x) + dx} y={py(y) + dy}>{nm}</text>
            </g>
          )
        )}
      </g>
      <path d="M432.500 179C437 171 445 162 453 156S466 147 473 145.500 485 144 490 145 506 150 511 157" fill="none" stroke="#222" strokeWidth=".8" />
      <path d="M452 155h2v2h-2zM472 145h2v2h-2zM487 144h2v2h-2zM433 176h2v2h-2zM437 172h2v2h-2z" fill="#111" />
      <g fill="#222">
        <text x="473" y="152.500">A</text>
        <text x="489" y="151.500">2000 K</text>
        <text x="453.500" y="163">5000 K</text>
        <text x="441.500" y="175.500">10000 K</text>
        <text x="436" y="182.500">25000 K</text>
        <text x="424" y="186" className="text-[7px]">∞</text>
      </g>
      <text x="398" y="171" className="text-[8px] font-bold" fill="#1a1a1a" stroke="#888" strokeOpacity=".6" strokeWidth="1" paintOrder="stroke">
        Color Pass/Fail Region
      </text>
      <path d="M418 213.500h15" stroke="#fff" strokeDasharray="1.500 1" />
      <circle cx="416" cy="214" r="1.500" fill="#345" stroke="#fff" strokeWidth="1.200" />
      <text x="435" y="217" className="text-[8px]" fill="#fff" stroke="#999" strokeWidth=".8" paintOrder="stroke">A1</text>
    </svg>
  );
}

function ColorSpace() {
  return (
    <section className="flex min-h-0 flex-[246] flex-col border border-t-0 border-[#999] bg-white">
      <Title>Color Space</Title>
      <label className="flex h-[14px] shrink-0 items-center justify-between border-b border-[#aaa] bg-[#e3e3e3] pr-[3px] pl-[2px]">
        <select aria-label="Gamut" className="flex-1 appearance-none">
          <option>NTSC</option>
        </select>
        <svg viewBox="0 0 6 4" className="h-[4px] w-[6px]" aria-hidden="true">
          <path d="m.5.500 2.500 2.500L5.500.500" fill="none" stroke="#444" />
        </svg>
      </label>
      <Chromaticity />
      <div className="h-[11px] shrink-0 border-t border-[#ddd] bg-[#f4f4f4]">
        <Tools
          names={["find", "sheet", "x", "wrench", "trayDown", "trayUp", "target", "axes", "zoom", "redArrow", "nodes", "nodesX"]}
          active="zoom"
          className="h-[10px] w-[115px]"
        />
      </div>
    </section>
  );
}

/* ------------------------------------------------------------------ */
/* Profiles                                                             */
/* ------------------------------------------------------------------ */

function ProfileChart() {
  const ticks = Array.from({ length: 18 }, (_, i) => i);
  return (
    <svg
      viewBox="341 276 335 48"
      preserveAspectRatio="xMinYMin meet"
      className="w-full shrink-0 bg-white font-['Liberation_Sans',Arial,sans-serif] text-[6px]"
      role="img"
      aria-label="Profile chart"
    >
      <g stroke="#ddd" shapeRendering="crispEdges">
        {ticks.slice(1).map((i) => <path key={i} d={`M${369 + i * 16.47} 281.500V308`} />)}
        <path d="M369 288.500H665.500M369 301.500H665.500" />
      </g>
      <path d="M369.500 281.500H665.500V308.500H369.500z" fill="none" stroke="#666" shapeRendering="crispEdges" />
      <g fill="none" strokeWidth="1">
        <path d="M397 285.500 399 283.500H418L420 282.500H639" stroke="#1de9ee" strokeDasharray="3 .6" />
        <path d="M397 299 400 294 402 293.500H580L583 292.500H610L612 293.500H636L638.500 296V300" stroke="#f22" strokeDasharray="3 .6" />
        <path d="M398 300 400 296.500 403 295.500H636L638.500 298V300" stroke="#ffa01c" strokeDasharray="2.500 .8" />
        <path d="M396 301 399 300H638" stroke="#6b35ee" strokeWidth="1.400" strokeDasharray="2.500 .5" />
        <path d="M392 301.800H643" stroke="#2a8a2a" strokeDasharray="2 1.500" />
      </g>
      <g fill="#333" textAnchor="middle">
        {ticks.map((i) => (
          <text key={i} x={369 + i * 16.47} y="315">{(i / 2).toFixed(2)}</text>
        ))}
        <text x="517" y="322">cm</text>
      </g>
      <g fill="#333" textAnchor="end">
        <text x="367" y="290.500">1000.0</text>
        <text x="367" y="304">0.0</text>
      </g>
      <text transform="translate(347 304) rotate(-90)" fill="#333">(Mixed)</text>
    </svg>
  );
}

const series = [
  ["#f00", "White..."],
  ["#008000", "Black L..."],
  ["#00f", "Red Lu..."],
  ["#ffa500", "Green..."],
];

function Profiles() {
  return (
    <section className="flex min-h-0 flex-[125] flex-col border-r border-b border-l border-[#aaa] bg-[#f0f0f0]">
      <Title active>Profiles</Title>
      <ProfileChart />
      <div className="mt-[2px] flex min-h-0 flex-1 gap-[1px] leading-[9px]">
        <div className="flex-[171] bg-white">
          <table className="h-[29px] w-full table-fixed border-collapse">
            <thead>
              <tr className="h-[10px]">
                <th className="w-[59px] border-r border-[#ddd] pl-[3px] text-left font-normal">Profile</th>
                <th />
              </tr>
            </thead>
            <tbody>
              <tr className="h-[9px] bg-[#ffa500]">
                <td className="bg-[#dc9d20] pl-[3px]">profile</td>
                <td />
              </tr>
              <tr className="h-[9px]">
                <td className="pl-[3px]">profile1</td>
                <td />
              </tr>
            </tbody>
          </table>
        </div>
        <div className="flex flex-[166] items-start bg-white">
          <table className="h-[47px] flex-1 table-fixed border-collapse">
            <thead>
              <tr className="h-[10px]">
                <th className="w-[12px] border-r border-[#ddd]" />
                <th className="w-[36px] border-r border-[#ddd] pl-[3px] text-left font-normal">Measu...</th>
                <th className="border-r border-[#ddd] pl-[3px] text-left font-normal">Value</th>
                <th className="w-[81px]" />
              </tr>
            </thead>
            <tbody>
              {series.map(([color, label]) => (
                <tr key={label} className="h-[9px]">
                  <td className="pl-[5px]">
                    <svg viewBox="0 0 7 6" className="h-[6px] w-[7px]" aria-hidden="true">
                      <rect x=".5" y=".5" width="6" height="5" rx="1" fill={color} stroke="#222" strokeWidth=".8" />
                    </svg>
                  </td>
                  <td className="pl-[3px] whitespace-nowrap">{label}</td>
                  <td />
                  <td />
                </tr>
              ))}
            </tbody>
          </table>
          <div className="flex w-[10px] flex-col items-center justify-between self-stretch border-t-[10px] border-white bg-[#f0f0f0] py-[3px]">
            <svg viewBox="0 0 6 4" className="h-[4px] w-[6px]" aria-hidden="true"><path d="m.5 3.500 2.500-2.500 2.500 2.500" fill="none" stroke="#333" strokeWidth="1.200" /></svg>
            <div className="h-[11px] w-full bg-[#cdcdcd]" />
            <svg viewBox="0 0 6 4" className="h-[4px] w-[6px]" aria-hidden="true"><path d="m.5.500 2.500 2.500L5.500.500" fill="none" stroke="#333" strokeWidth="1.200" /></svg>
          </div>
        </div>
      </div>
      <div className="flex h-[14px] shrink-0 items-center">
        <Tools names={["find", "add", "x", "sheet", "wrench", "trayDown", "trayUp", "down", "up"]} className="w-[86px]" />
        <div className="ml-[2px]"><Divider /></div>
        <Tools names={["chart"]} className="ml-[1px] w-[11px]" />
        <button type="button" className="w-[8px]">ß</button>
        <div className="flex w-[17px] justify-center"><Caret /></div>
        <Tools names={["lines", "slash", "notEqual", "cameraGray", "table", "target"]} className="w-[57px]" />
      </div>
    </section>
  );
}

/* ------------------------------------------------------------------ */
/* Right column                                                         */
/* ------------------------------------------------------------------ */

const measurements: { name: string; flags: string; kind: "closed" | "open" | "child" | "last" | "leaf" }[] = [
  { name: "White", flags: "INV UE", kind: "closed" },
  { name: "Black", flags: "INV O...", kind: "closed" },
  { name: "Red", flags: "INV UE", kind: "closed" },
  { name: "Green", flags: "INV UE", kind: "closed" },
  { name: "Blue", flags: "INV UE", kind: "open" },
  { name: "Lu...", flags: "UE", kind: "child" },
  { name: "x", flags: "INV", kind: "child" },
  { name: "y", flags: "INV", kind: "last" },
  { name: "White...", flags: "INV", kind: "leaf" },
];

const branchLines: Record<string, string> = {
  closed: "M4.500 0v11M4.500 5.500H9",
  open: "M4.500 0v11M4.500 5.500H9",
  child: "M4.500 0v11M10.500 0v11M10.500 5.500H15",
  last: "M4.500 0v11M10.500 0v5.500H15",
  leaf: "M4.500 0v5.500H9",
};

function Branch({ kind }: { kind: string }) {
  const nested = kind === "child" || kind === "last";
  return (
    <svg viewBox={nested ? "0 0 16 11" : "0 0 10 11"} className={`h-[11px] shrink-0 ${nested ? "w-[16px]" : "w-[10px]"}`} aria-hidden="true">
      <path d={branchLines[kind]} fill="none" stroke="#bbb" strokeWidth=".8" />
      {(kind === "closed" || kind === "open") && (
        <>
          <path d="M2.500 3.500h4v4h-4z" fill="#eef" stroke="#99a" strokeWidth=".8" />
          <path d={kind === "closed" ? "M3 5.500h3M4.500 4v3" : "M3 5.500h3"} stroke="#446" strokeWidth=".8" />
        </>
      )}
    </svg>
  );
}

function Measurements() {
  return (
    <section className="flex min-h-0 flex-[179] flex-col bg-white">
      <Title>Measurements</Title>
      <div className="flex min-h-0 flex-1 flex-col overflow-hidden">
        <table className="w-full table-fixed border-collapse leading-[10px] whitespace-nowrap">
          <colgroup>
            <col className="w-[38px]" />
            <col className="w-[42px]" />
            <col className="w-[13px]" />
            <col />
          </colgroup>
          <thead>
            <tr className="h-[10px]">
              <th className="border-r border-[#ddd] pl-[4px] text-left font-normal">Name</th>
              <th className="border-r border-[#ddd] pl-[3px] text-left font-normal">Present...</th>
              <th className="border-r border-[#ddd] font-normal">T</th>
              <th className="pl-[3px] text-left font-normal">Not V...</th>
            </tr>
          </thead>
          <tbody>
            {measurements.map((m, i) => {
              const on = i === 5;
              return (
                <tr key={i} className={`h-[11px] ${on ? "bg-[#e0a020]" : ""}`}>
                  <td className={`border-r border-[#eee] ${on ? "bg-[linear-gradient(to_right,#ffa500_15px,#dc9d20_15px)]" : ""}`}>
                    <span className="flex items-center"><Branch kind={m.kind} />{m.name}</span>
                  </td>
                  <td className="border-r border-[#eee] pl-[3px]">
                    <span className="flex items-center justify-between pr-[4px]">
                      <select aria-label={`Presentation of ${m.name}`} className="w-[31px] appearance-none leading-[10px]">
                        <option>Standa...</option>
                      </select>
                      <svg viewBox="0 0 4 3" className="h-[3px] w-[4px]" aria-hidden="true"><path d="M0 0h4L2 3z" fill="#999" /></svg>
                    </span>
                  </td>
                  <td className={`border-r border-[#eee] ${on ? "border border-[#c08a1a] bg-[#f6f0e0]" : ""}`}>
                    <svg viewBox="0 0 7 5" className="mx-auto h-[5px] w-[7px]" aria-hidden="true">
                      <rect x=".5" y=".5" width="6" height="4" rx="1.500" fill="#f6f58a" stroke="#a3a37a" strokeWidth=".9" />
                    </svg>
                  </td>
                  <td className="pl-[3px]">{m.flags}</td>
                </tr>
              );
            })}
          </tbody>
        </table>
        <div className="grid flex-1 grid-cols-[38px_42px_13px_1fr] divide-x divide-[#eee]"><div /><div /><div /><div /></div>
      </div>
      <div className="flex h-[10px] shrink-0 items-center justify-between bg-[#f0f0f0] pr-[1px] pl-[4px]">
        <svg viewBox="0 0 4 6" className="h-[6px] w-[4px]" aria-hidden="true"><path d="M3.500.500 1 3l2.500 2.500" fill="none" stroke="#222" /></svg>
        <div className="ml-[3px] h-full flex-1 bg-[#cdcdcd]" />
        <svg viewBox="0 0 4 6" className="ml-[4px] h-[6px] w-[4px]" aria-hidden="true"><path d="M.5.500 3 3 .5 5.500" fill="none" stroke="#222" /></svg>
      </div>
      <Tools
        names={["wave", "x", "sheet", "rainbow", "camera", "wrench", "trayDown", "trayUp", "down", "up", "lens", "trayPink"]}
        className="h-[12px] w-[115px] shrink-0"
      />
    </section>
  );
}

function Captures() {
  return (
    <section className="flex min-h-0 flex-[180] flex-col border-b border-[#aaa] bg-white">
      <Title>Captures</Title>
      <div className="flex h-[25px] shrink-0 items-center justify-between bg-[#f0f0f0] pr-[3px] pl-[6px] whitespace-nowrap">
        <span>Underexposed:</span>
        <button type="button">Set for all filters</button>
      </div>
      <table className="w-full table-fixed border-collapse leading-[9px]">
        <colgroup>
          <col className="w-[42px]" />
          <col className="w-[21px]" />
          <col className="w-[11px]" />
          <col />
        </colgroup>
        <thead>
          <tr className="h-[11px]">
            <th className="border-r border-[#ddd] pl-[3px] text-left font-normal">Name</th>
            <th className="border-r border-[#ddd]" />
            <th className="border-r border-[#ddd]" />
            <th />
          </tr>
        </thead>
        <tbody>
          {["WHT", "BLACK", "GREY127", "RED", "GREEN", "BLUE"].map((n) => (
            <tr key={n} className="h-[10px]">
              <td className="pl-[3px]">{n}</td>
              <td className="pl-[2px]">
                <button type="button" aria-label={`Capture ${n}`} className="flex h-[9px] w-[18px] items-center justify-center border border-[#ccc] bg-[#e4e4e4]">
                  <Icon name="camera" className="size-[7px]" />
                </button>
              </td>
              <td />
              <td />
            </tr>
          ))}
        </tbody>
      </table>
      <div className="flex-1" />
      <Tools
        names={["find", "waveGray", "xGray", "sheetGray", "brackets", "cameraGray", "clock", "trayGray", "trayUp", "downGray", "upGray", "lens"]}
        className="h-[13px] w-[115px] shrink-0"
      />
    </section>
  );
}

/* ------------------------------------------------------------------ */
/* Page                                                                 */
/* ------------------------------------------------------------------ */

function MenuBar() {
  return (
    <header className="flex h-[15px] shrink-0 items-stretch bg-[#f5f5f5] pt-[2px]">
      <nav className="flex items-center gap-[10px] pl-[7px]">
        {["File", "Edit", "Tools", "View", "Filter", "Window", "Help"].map((m) => (
          <button key={m} type="button">{m}</button>
        ))}
      </nav>
      <div className="ml-[6px] flex items-center"><Divider /></div>
      <Tools names={["doc", "folder", "save"]} className="ml-[2px] w-[34px]" />
      <div className="ml-auto flex w-[124px] items-center gap-[7px] overflow-hidden bg-[#5c4c4b] pl-[2px]">
        <svg viewBox="0 0 11 10" className="h-[10px] w-[11px] shrink-0" aria-hidden="true">
          <path d="M0 1h2.500L4.500 9H3z" fill="#e8412c" />
          <path d="M2.500 1 4 1l2 5-1.500 3z" fill="#f6a21c" />
          <path d="M4.500 9 5.500 1 7 5l-1 4z" fill="#5bb84a" />
          <path d="M6 3 7.500 9 8.500 6 7.500 1z" fill="#2d8fe0" />
          <path d="M8.500 1H11L8.500 9H7z" fill="#8a3fd0" />
        </svg>
        <div className="flex gap-[6px] font-['Roboto',sans-serif] text-[9px] font-bold whitespace-nowrap text-white">
          WESTBORO <span className="font-normal text-[#d8d0ce]">PHOTONICS</span>
        </div>
      </div>
    </header>
  );
}

const cell = "flex items-center border-r border-[#c4c4c4]";

export default function App() {
  return (
    <div className="flex h-screen min-h-[415px] flex-col overflow-hidden bg-[#fafafa] font-['Noto_Sans','Open_Sans',sans-serif] text-[7px] text-[#222]">
      <MenuBar />
      <main className="grid min-h-0 flex-1 grid-cols-[338fr_338fr_121fr] gap-x-[1px]">
        <div className="flex min-h-0 min-w-0 flex-col">
          <Workspace />
          <div role="tablist" className="mb-[2px] flex shrink-0">
            <Tab icon="table" active>Workspace</Tab>
            <Tab icon="histogram">Histogram</Tab>
            <Tab icon="surface">Surface Plot</Tab>
          </div>
          <Aois />
          <div role="tablist" className="flex shrink-0">
            <Tab icon="orange" active>AOIs</Tab>
            <Tab icon="points">Refinements</Tab>
            <Tab icon="split">Highlights</Tab>
          </div>
        </div>
        <div className="flex min-h-0 min-w-0 flex-col">
          <ColorSpace />
          <div className="h-[2px] shrink-0" />
          <Profiles />
          <div role="tablist" className="flex shrink-0 pr-[2px]">
            <Tab icon="glasses" grow>Preview</Tab>
            <Tab icon="flags" grow>Instru...</Tab>
            <Tab icon="doc" grow>User C...</Tab>
            <Tab icon="lens" grow>Settings</Tab>
            <Tab icon="chart" grow>Spectra...</Tab>
            <Tab icon="colorR" grow>Color R...</Tab>
            <Tab icon="colorC" grow>Color C...</Tab>
            <Tab icon="histogram" active grow>Profiles</Tab>
          </div>
        </div>
        <div className="flex min-h-0 min-w-0 flex-col">
          <Measurements />
          <div role="tablist" className="mb-[2px] flex shrink-0">
            <Tab icon="heat" active grow>Measurements</Tab>
            <Tab icon="rainbow" grow>Presentations</Tab>
          </div>
          <Captures />
          <div role="tablist" className="flex shrink-0">
            <Tab icon="camera" active>Captures</Tab>
            <Tab icon="report">Reports</Tab>
          </div>
        </div>
      </main>
      <footer className="mt-[1px] flex h-[14px] shrink-0 items-stretch border-b border-[#777] bg-[#f0f0f0] whitespace-nowrap">
        <div className="flex flex-1 items-center gap-[3px] pl-[1px]">
          <span className="size-[5px] border border-[#555]" />
          Selected area: 1.55 cm² (1.15 cm x 1.72 cm), diagonal length 2.07 cm, center (-3.276,-5.961)
        </div>
        <div className={`${cell} pr-[3px]`}>? °C</div>
        <div className={`${cell} w-[84px] justify-center`}>Nikon 24 mm @ 50 cm</div>
        <div className={`${cell} w-[112px] justify-between px-[4px]`}>
          Blue:luminance
          <div role="progressbar" aria-label="Exposure level" aria-valuenow={90} className="flex h-[9px] w-[43px] border border-[#999] bg-white">
            <div className="w-[90%] bg-[#90ee90]" />
          </div>
        </div>
        <div className={`${cell} w-[12px] justify-center`}>0°</div>
        <div className={`${cell} w-[70px] justify-center`}>0.00687cm/pixel</div>
        <div className={`${cell} w-[61px] justify-center gap-[2px]`}>
          <Icon name="size" className="size-[8px]" />
          1364 x 2158
        </div>
        <div className="w-[5px]" />
      </footer>
    </div>
  );
}
